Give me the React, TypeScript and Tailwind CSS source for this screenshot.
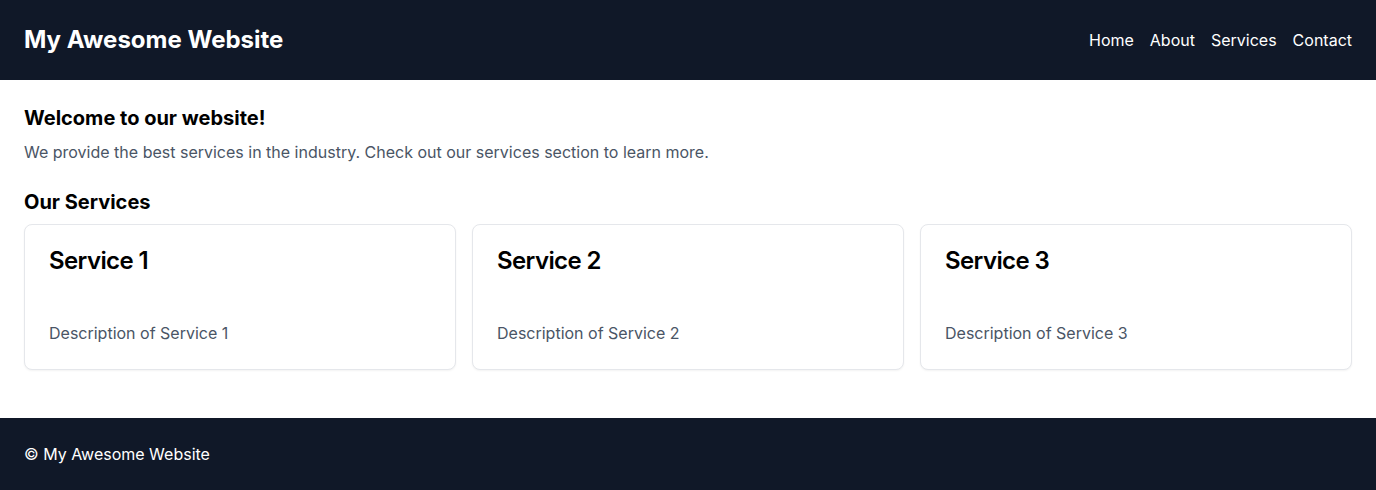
import React from 'react';

const services = [
  { title: 'Service 1', description: 'Description of Service 1' },
  { title: 'Service 2', description: 'Description of Service 2' },
  { title: 'Service 3', description: 'Description of Service 3' },
];

const App = () => {
  return (
    <div className="min-h-screen bg-white text-black" style={{ fontFamily: 'Inter, "Noto Sans", sans-serif' }}>
      <header className="h-20 bg-gray-900 text-white flex items-center justify-between px-6">
        <h1 className="text-2xl font-bold">My Awesome Website</h1>
        <nav className="flex gap-4 text-base">
          <a href="#">Home</a>
          <a href="#">About</a>
          <a href="#">Services</a>
          <a href="#">Contact</a>
        </nav>
      </header>

      <main className="p-6">
        <h2 className="text-xl font-bold">Welcome to our website!</h2>
        <p className="mt-2 text-gray-600">
          We provide the best services in the industry. Check out our services section to learn more.
        </p>

        <h2 className="mt-6 text-xl font-bold">Our Services</h2>
        <div className="mt-2 grid grid-cols-3 gap-4">
          {services.map((service) => (
            <div key={service.title} className="rounded-lg border border-gray-200 bg-white p-6 shadow-xs">
              <h3 className="text-2xl font-semibold leading-none tracking-tight">{service.title}</h3>
              <p className="mt-12 text-gray-600">{service.description}</p>
            </div>
          ))}
        </div>
      </main>

      <footer className="mt-6 bg-gray-900 text-white p-6">
        <p>© My Awesome Website</p>
      </footer>
    </div>
  );
};

export default App;
